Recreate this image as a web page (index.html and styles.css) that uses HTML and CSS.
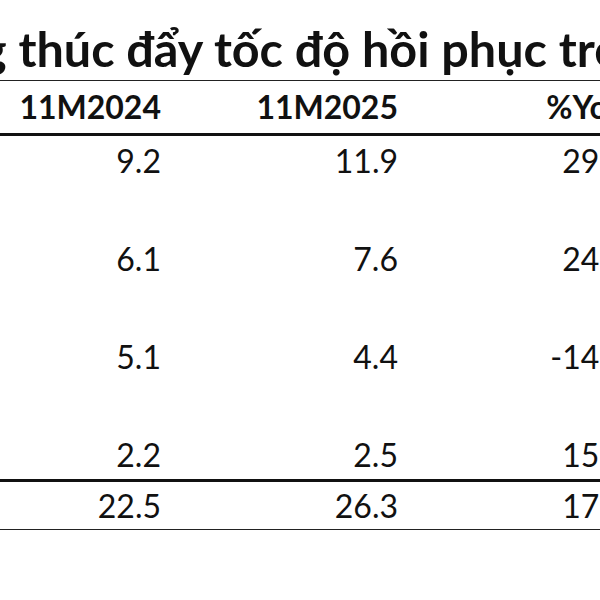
FILE: index.html
```html
<!DOCTYPE html>
<html lang="vi">
<head>
  <meta charset="UTF-8" />
  <meta name="viewport" content="width=device-width, initial-scale=1.0" />
  <title>Tăng trưởng 11M2025</title>
  <link rel="stylesheet" href="styles.css">
</head>
<body>
  <div class="sheet">
    <h1 class="title">g thúc đẩy tốc độ hồi phục trong năm</h1>

    <div class="row head">
      <div class="cell c1">11M2024</div>
      <div class="cell c2">11M2025</div>
      <div class="cell c3">%YoY</div>
    </div>

    <div class="body">
      <div class="row">
        <div class="cell c1">9.2</div>
        <div class="cell c2">11.9</div>
        <div class="cell c3">29%</div>
      </div>
      <div class="row">
        <div class="cell c1">6.1</div>
        <div class="cell c2">7.6</div>
        <div class="cell c3">24%</div>
      </div>
      <div class="row">
        <div class="cell c1">5.1</div>
        <div class="cell c2">4.4</div>
        <div class="cell c3">-14%</div>
      </div>
      <div class="row last">
        <div class="cell c1">2.2</div>
        <div class="cell c2">2.5</div>
        <div class="cell c3">15%</div>
      </div>
    </div>

    <div class="row total">
      <div class="cell c1">22.5</div>
      <div class="cell c2">26.3</div>
      <div class="cell c3">17%</div>
    </div>
  </div>
</body>
</html>
```

FILE: styles.css
```css
html, body {
  margin: 0;
  background: #fff;
  overflow: hidden;
}
body {
  font-family: Lato, "Noto Sans", sans-serif;
  color: #111;
  width: 600px;
  height: 600px;
}
.sheet {
  width: 640px;
}
.title {
  margin: 0;
  padding: 21px 0 5px;
  font-size: 48.5px;
  line-height: 54px;
  font-weight: 700;
  white-space: nowrap;
  text-indent: -19px;
  border-bottom: 1.5px solid #222;
}
.row {
  display: grid;
  grid-template-columns: 161px 237px 227px;
  font-size: 32px;
}
.cell {
  text-align: right;
  line-height: 50px;
}
.head {
  height: 52px;
  font-weight: 700;
  border-bottom: 3px solid #111;
}
.head .cell { line-height: 52px; }
.body .row { height: 98px; }
.body .row.last { height: 49px; }
.body {
  border-bottom: 3px solid #111;
}
.total {
  height: 47px;
  border-bottom: 1.5px solid #222;
}
.total .cell { line-height: 47px; }
```
